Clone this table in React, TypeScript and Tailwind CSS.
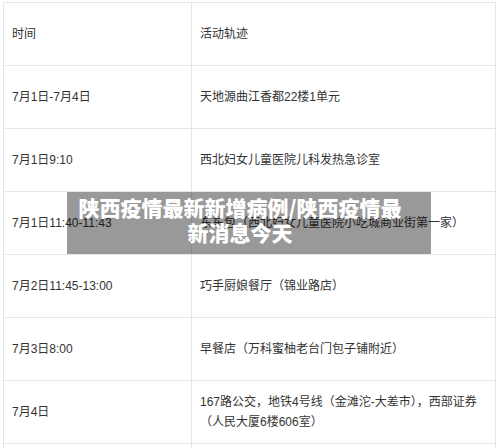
const rows: { time: string; place: string }[] = [
  { time: '时间', place: '活动轨迹' },
  { time: '7月1日-7月4日', place: '天地源曲江香都22楼1单元' },
  { time: '7月1日9:10', place: '西北妇女儿童医院儿科发热急诊室' },
  { time: '7月1日11:40-11:43', place: '东东包（西北妇女儿童医院小吃城商业街第一家）' },
  { time: '7月2日11:45-13:00', place: '巧手厨娘餐厅（锦业路店）' },
  { time: '7月3日8:00', place: '早餐店（万科蜜柚老台门包子铺附近）' },
  { time: '7月4日', place: '167路公交，地铁4号线（金滩沱-大差市），西部证券（人民大厦6楼606室）' },
  { time: '', place: '' },
]

export default function App() {
  return (
    <div
      className="relative w-[500px] h-[448px] overflow-hidden bg-white text-[#333333]"
      style={{ fontFamily: '"Liberation Sans", "Noto Sans CJK SC", sans-serif' }}
    >
      <div className="ml-[3px] mt-[2px] w-[493px] border-l border-t border-[#e6e6e6]">
        {rows.map((row, i) => (
          <div
            key={i}
            className="grid grid-cols-[188px_304px] h-[63px] border-b border-[#e6e6e6]"
          >
            <div className="flex items-center px-2 border-r border-[#e6e6e6] text-[12px]">
              {row.time}
            </div>
            <div className="flex items-center pl-2 pr-[8px] border-r border-[#e6e6e6] text-[12px] leading-[20px]">
              <span>{row.place}</span>
            </div>
          </div>
        ))}
      </div>

      {/* title banner over the table */}
      <div className="absolute left-[67px] top-[192px] w-[364px] h-[62px] bg-black/40 pl-[10px] pr-[28px] pt-[3px]">
        <p
          className="text-white font-black text-[21px] leading-[25px] text-center"
          style={{ fontFamily: '"Noto Sans CJK SC", sans-serif' }}
        >
          陕西疫情最新新增病例/陕西疫情最新消息今天
        </p>
      </div>
    </div>
  )
}
